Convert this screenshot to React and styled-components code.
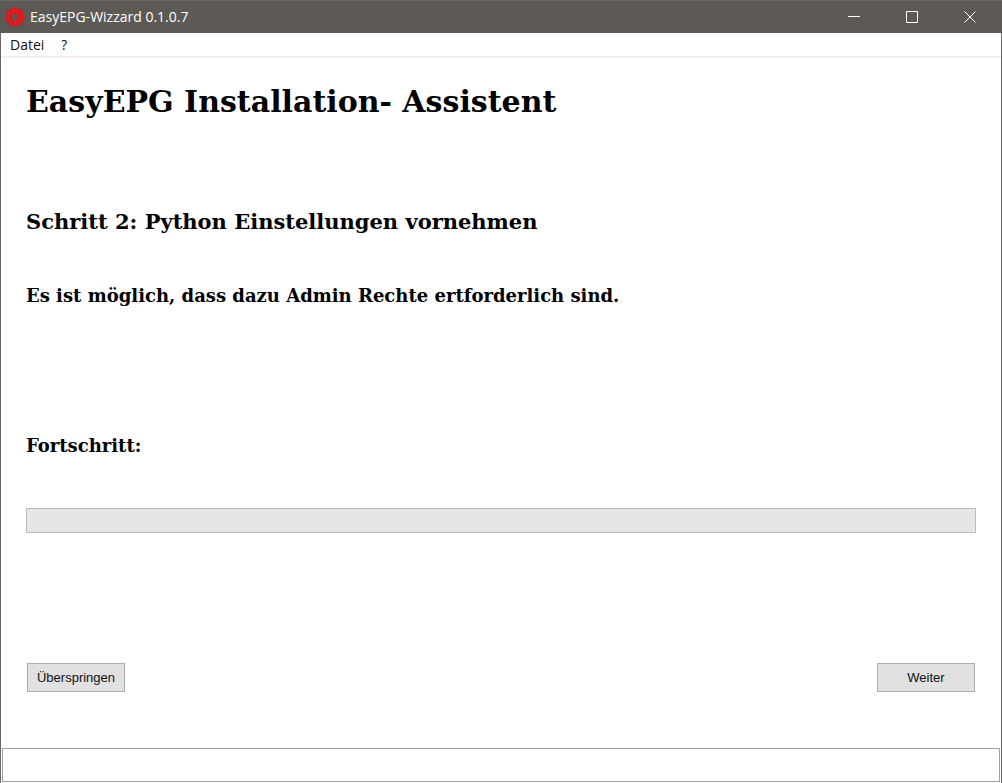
import React from "react";
import styled, { createGlobalStyle } from "styled-components";

const Global = createGlobalStyle`
  *, *::before, *::after { box-sizing: border-box; }
  body { margin: 0; background: #fff; color: #000; }
`;

const ui = `"Open Sans", "Noto Sans", sans-serif`;

const Window = styled.div`
  display: flex;
  flex-direction: column;
  min-height: 100vh;
  border: solid #6b6865;
  border-width: 0 1px;
  background: #fff;
`;

const TitleBar = styled.header`
  display: flex;
  align-items: center;
  height: 33px;
  margin: 0 -1px;
  padding: 0 3px 0 5px;
  border-top: 1px solid #6b6865;
  background: #5d5955;
  color: #fff;
  font: 14px/20px ${ui};
`;

const TitleText = styled.span`
  flex: 1;
  margin-left: 5px;
`;

const CaptionButton = styled.button`
  display: flex;
  align-items: center;
  justify-content: center;
  width: 58px;
  height: 32px;
  padding: 0;
  border: 0;
  background: transparent;
  color: #fff;
`;

const MenuBar = styled.nav`
  display: flex;
  gap: 1px;
  height: 25px;
  padding: 0 1px;
  border-bottom: 2px solid #f0f0f0;
`;

const MenuItem = styled.button`
  padding: 1px 8px 0;
  border: 0;
  background: transparent;
  color: #111;
  font: 14px/22px ${ui};
`;

const Main = styled.main`
  flex: 1;
  display: flex;
  flex-direction: column;
  padding: 24px 25px 56px;
  font-family: "DejaVu Serif", serif;
  font-weight: bold;
`;

const Title = styled.h1`
  margin: 0 0 84px;
  font-size: 30px;
  line-height: 40px;
`;

const Step = styled.h2`
  margin: 0 0 42px;
  font-size: 21px;
  line-height: 32px;
`;

const Note = styled.p`
  margin: 0 0 118px;
  font-size: 18px;
  line-height: 32px;
`;

const ProgressLabel = styled.label`
  margin: 0 0 46px;
  font-size: 18px;
  line-height: 32px;
`;

const Progress = styled.progress`
  appearance: none;
  display: block;
  width: 100%;
  height: 25px;
  border: 1px solid #bcbcbc;
  background: #e6e6e6;
  &::-webkit-progress-bar { background: #e6e6e6; }
  &::-webkit-progress-value { background: #06b025; }
`;

const Actions = styled.div`
  display: flex;
  justify-content: space-between;
  margin-top: auto;
  padding: 0 1px;
`;

const ActionButton = styled.button`
  width: 98px;
  height: 29px;
  padding: 0;
  border: 1px solid #adadad;
  background: #e1e1e1;
  color: #111;
  font: 13px/20px "Liberation Sans", sans-serif;
`;

const Status = styled.input`
  height: 34px;
  margin: 0 1px 1px;
  padding: 0 8px;
  border: 1px solid #a0a0a0;
  background: #fff;
  font: 14px/20px ${ui};
`;

const teeth = Array.from({ length: 12 }, (_, i) => i * 30);

function Logo() {
  return (
    <svg width="20" height="20" viewBox="0 0 20 20" aria-hidden="true">
      {teeth.map((a) => (
        <rect key={a} x="8.6" y="0.2" width="2.8" height="4" fill="#e0161d" transform={`rotate(${a} 10 10)`} />
      ))}
      <circle cx="10" cy="10" r="5.8" fill="none" stroke="#e0161d" strokeWidth="5.4" />
      <circle cx="10" cy="10" r="7" fill="none" stroke="#d9685f" strokeWidth=".8" strokeDasharray="1 4" />
      <path d="M10 10v5" stroke="#5d5955" strokeWidth="2" />
    </svg>
  );
}

function Glyph({ d }) {
  return (
    <svg width="12" height="12" viewBox="0 0 12 12" fill="none" stroke="#fff" aria-hidden="true">
      <path d={d} />
    </svg>
  );
}

export default function App() {
  return (
    <>
      <Global />
      <Window>
        <TitleBar>
          <Logo />
          <TitleText>EasyEPG-Wizzard 0.1.0.7</TitleText>
          <CaptionButton aria-label="Minimieren"><Glyph d="M0 5.5H12" /></CaptionButton>
          <CaptionButton aria-label="Maximieren"><Glyph d="M.5 .5H11.5V11.5H.5Z" /></CaptionButton>
          <CaptionButton aria-label="Schließen"><Glyph d="M.5 .5L11.5 11.5M11.5 .5L.5 11.5" /></CaptionButton>
        </TitleBar>
        <MenuBar>
          <MenuItem>Datei</MenuItem>
          <MenuItem>?</MenuItem>
        </MenuBar>
        <Main>
          <Title>EasyEPG Installation- Assistent</Title>
          <Step>Schritt 2: Python Einstellungen vornehmen</Step>
          <Note>Es ist möglich, dass dazu Admin Rechte ertforderlich sind.</Note>
          <ProgressLabel htmlFor="progress">Fortschritt:</ProgressLabel>
          <Progress id="progress" value={0} max={100} />
          <Actions>
            <ActionButton>Überspringen</ActionButton>
            <ActionButton>Weiter</ActionButton>
          </Actions>
        </Main>
        <Status aria-label="Status" readOnly />
      </Window>
    </>
  );
}
